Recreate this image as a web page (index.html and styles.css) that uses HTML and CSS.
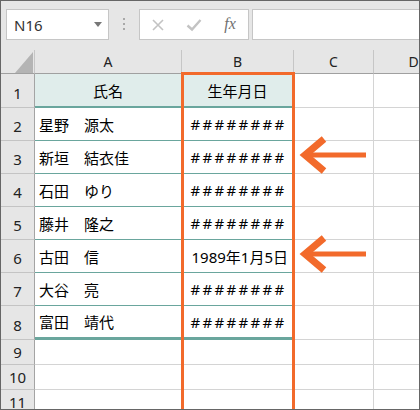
FILE: index.html
```html
<!DOCTYPE html>
<html>
<head>
    <title>生年月日</title>
    <link rel="stylesheet" href="styles.css">
</head>
<body>
<div class="excel">
    <div class="toolbar">
        <div class="namebox"><span>N16</span><i class="caret"></i></div>
        <div class="grip"><i></i><i></i><i></i></div>
        <div class="fxbtns">
            <span class="btn">
                <svg width="14" height="14" viewBox="0 0 14 14"><path d="M2 2L12 12M12 2L2 12" stroke="#c3c3c3" stroke-width="1.6" fill="none"/></svg>
            </span>
            <span class="btn">
                <svg width="16" height="14" viewBox="0 0 16 14"><path d="M1.5 7.5L6 11.5L14.5 2" stroke="#c3c3c3" stroke-width="2.4" fill="none"/></svg>
            </span>
            <span class="btn fx">fx</span>
        </div>
        <div class="formula"></div>
    </div>

    <div class="sheet">
        <div class="row head">
            <div class="corner"><i class="tri"></i></div>
            <div>A</div><div>B</div><div>C</div><div>D</div>
        </div>
        <div class="row first">
            <div class="rn">1</div>
            <div class="t a">氏名</div><div class="t b">生年月日</div><div></div><div></div>
        </div>
        <div class="row">
            <div class="rn">2</div>
            <div class="t a">星野　源太</div><div class="t b hash">########</div><div></div><div></div>
        </div>
        <div class="row">
            <div class="rn">3</div>
            <div class="t a">新垣　結衣佳</div><div class="t b hash">########</div><div></div><div></div>
        </div>
        <div class="row">
            <div class="rn">4</div>
            <div class="t a">石田　ゆり</div><div class="t b hash">########</div><div></div><div></div>
        </div>
        <div class="row">
            <div class="rn">5</div>
            <div class="t a">藤井　隆之</div><div class="t b hash">########</div><div></div><div></div>
        </div>
        <div class="row">
            <div class="rn">6</div>
            <div class="t a">古田　信</div><div class="t b date">1989年1月5日</div><div></div><div></div>
        </div>
        <div class="row">
            <div class="rn">7</div>
            <div class="t a">大谷　亮</div><div class="t b hash">########</div><div></div><div></div>
        </div>
        <div class="row last">
            <div class="rn">8</div>
            <div class="t a">富田　靖代</div><div class="t b hash">########</div><div></div><div></div>
        </div>
        <div class="row short">
            <div class="rn">9</div><div></div><div></div><div></div><div></div>
        </div>
        <div class="row short">
            <div class="rn">10</div><div></div><div></div><div></div><div></div>
        </div>
        <div class="row short">
            <div class="rn">11</div><div></div><div></div><div></div><div></div>
        </div>
    </div>

    <!-- selection around column B -->
    <div class="select-b"></div>

    <svg class="arrow arrow-1" width="72" height="40" viewBox="0 0 72 40">
        <rect x="8" y="17.5" width="62" height="5" fill="#f26a2b"/>
        <polyline points="28,4 9,20 28,36" fill="none" stroke="#f26a2b" stroke-width="7"/>
    </svg>
    <svg class="arrow arrow-2" width="72" height="40" viewBox="0 0 72 40">
        <rect x="8" y="17.5" width="62" height="5" fill="#f26a2b"/>
        <polyline points="28,4 9,20 28,36" fill="none" stroke="#f26a2b" stroke-width="7"/>
    </svg>
</div>
</body>
</html>
```

FILE: styles.css
```css
body {
    margin: 0;
    font-family: "Noto Sans", "Noto Sans CJK JP", sans-serif;
}
.excel {
    width: 420px;
    height: 410px;
    box-sizing: border-box;
    border: 1px solid #666;
    background: #e6e6e6;
    position: relative;
    overflow: hidden;
}

/* formula bar */
.toolbar {
    height: 49px;
    box-sizing: border-box;
    padding: 8px 0 0 5px;
    display: flex;
    align-items: flex-start;
}
.namebox {
    width: 103px;
    height: 31px;
    box-sizing: border-box;
    background: #fff;
    border: 1px solid #c6c6c6;
    display: flex;
    align-items: center;
    padding-left: 7px;
    font-size: 15px;
    color: #333;
}
.namebox span {
    flex: 1;
}
.caret {
    margin-right: 6px;
    border-left: 4px solid transparent;
    border-right: 4px solid transparent;
    border-top: 5px solid #777;
}
.grip {
    width: 30px;
    display: flex;
    flex-direction: column;
    align-items: center;
    gap: 3px;
    padding-top: 9px;
}
.grip i {
    width: 2px;
    height: 2px;
    background: #a8a8a8;
}
.fxbtns {
    width: 110px;
    height: 31px;
    box-sizing: border-box;
    background: #fff;
    border: 1px solid #c6c6c6;
    display: flex;
}
.btn {
    flex: 1;
    display: flex;
    align-items: center;
    justify-content: center;
}
.fx {
    font-family: "Liberation Serif", serif;
    font-style: italic;
    font-size: 16px;
    color: #707070;
    padding-bottom: 2px;
}
.formula {
    flex: 1;
    height: 31px;
    box-sizing: border-box;
    margin-left: 3px;
    background: #fff;
    border: 1px solid #c6c6c6;
    border-right: none;
}

/* sheet grid */
.sheet {
    background: #fff;
}
.row {
    display: grid;
    grid-template-columns: 34px 147px 112px 80px 80px;
    height: 33px;
}
.row > div {
    box-sizing: border-box;
    background: #fff;
    border-right: 1px solid #d4d4d4;
    border-bottom: 1px solid #d4d4d4;
    display: flex;
    align-items: center;
    font-size: 15px;
    color: #000;
    white-space: nowrap;
    overflow: hidden;
}
.row.first {
    height: 34px;
}
.row.last {
    height: 34px;
}
.row.short {
    height: 25px;
}
.head {
    height: 24px;
}
.head > div {
    background: #e6e6e6;
    border-right-color: #c6c6c6;
    border-bottom-color: #a0a0a0;
    justify-content: center;
    font-size: 14px;
    color: #222;
}
.head > .corner {
    justify-content: flex-end;
    align-items: flex-end;
    padding-right: 1px;
}
.tri {
    border-left: 18px solid transparent;
    border-bottom: 21px solid #b4b4b4;
}
.row > .rn {
    background: #e6e6e6;
    border-right-color: #a4a4a4;
    border-bottom-color: #c4c4c4;
    justify-content: center;
    padding-top: 4px;
    color: #222;
}
.short > .rn {
    padding-top: 0;
}

.row > .t {
    border-bottom-color: #6aa69d;
    border-right-color: #6aa69d;
}
.first > .t {
    background: #e0edeb;
    border-bottom-width: 2px;
    justify-content: center;
}
.last > .t {
    border-bottom-width: 3px;
}
.a {
    padding-left: 4px;
}
.first > .a {
    padding-left: 0;
}
.b {
    justify-content: center;
}
.hash {
    letter-spacing: 2.3px;
    padding-left: 2px;
}
.row > .date {
    justify-content: flex-end;
    padding-right: 5px;
}

/* overlays */
.select-b {
    position: absolute;
    left: 180px;
    top: 71px;
    width: 114px;
    height: 400px;
    box-sizing: border-box;
    border: 3px solid #f26a2b;
    border-bottom: none;
}
.arrow {
    position: absolute;
    left: 295px;
}
.arrow-1 {
    top: 134px;
}
.arrow-2 {
    top: 233px;
}
```
